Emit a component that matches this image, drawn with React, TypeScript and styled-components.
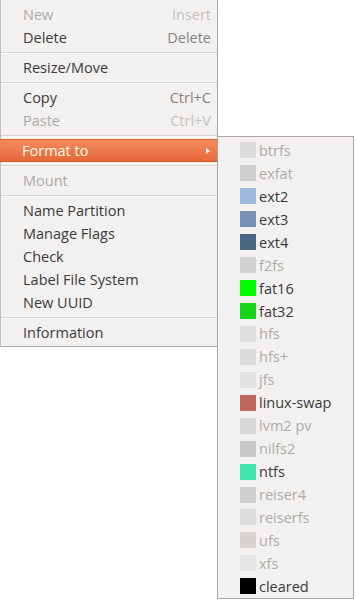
import React from "react";
import styled, { createGlobalStyle } from "styled-components";

const Global = createGlobalStyle`
  html, body { margin: 0; padding: 0; background: #ffffff; }
  body { font-family: "Open Sans", "DejaVu Sans", sans-serif; }
`;

const Page = styled.div`
  display: flex;
  align-items: flex-start;
  width: 356px;
  height: 602px;
  overflow: hidden;
`;

const MainMenu = styled.div`
  box-sizing: border-box;
  width: 218px;
  padding: 3px 0 2px;
  background: #f2f1f0;
  border-left: 1px solid #c4c1bd;
  border-right: 1px solid #a9a6a2;
  border-bottom: 1px solid #a9a6a2;
  display: flex;
  flex-direction: column;
`;

const SubMenu = styled.div`
  box-sizing: border-box;
  width: 137px;
  margin-top: 136px;
  margin-left: -1px;
  padding: 2px 0 0;
  background: #f2f1f0;
  border: 1px solid #a9a6a2;
  display: flex;
  flex-direction: column;
`;

const Item = styled.div<{ $disabled?: boolean; $active?: boolean }>`
  box-sizing: border-box;
  height: 23px;
  display: flex;
  align-items: center;
  justify-content: space-between;
  padding: 0 6px 0 22px;
  font-size: 14.5px;
  color: ${(p) => (p.$active ? "#fffbea" : p.$disabled ? "#aeaba8" : "#3a3a3a")};
  background: ${(p) =>
    p.$active ? "linear-gradient(#f38a5b, #e7683a)" : "transparent"};
  border-top: ${(p) => (p.$active ? "1px solid #d9673a" : "none")};
  border-bottom: ${(p) => (p.$active ? "1px solid #cf5b2c" : "none")};
  margin: ${(p) => (p.$active ? "0 -1px" : "0")};
`;

const Shortcut = styled.span<{ $disabled?: boolean }>`
  color: ${(p) => (p.$disabled ? "#c4c2bf" : "#858380")};
`;

const Arrow = styled.span`
  width: 0;
  height: 0;
  margin-right: 2px;
  border-top: 3px solid transparent;
  border-bottom: 3px solid transparent;
  border-left: 4px solid #fff4e8;
`;

const Separator = styled.div`
  height: 7px;
  display: flex;
  flex-direction: column;
  justify-content: center;
  &::before {
    content: "";
    display: block;
    height: 1px;
    background: #d8d5d1;
  }
  &::after {
    content: "";
    display: block;
    height: 1px;
    background: #fbfbfa;
  }
`;

const FsItem = styled.div<{ $disabled?: boolean }>`
  height: 22.95px;
  display: flex;
  align-items: center;
  gap: 3px;
  padding-left: 22px;
  font-size: 14.5px;
  color: ${(p) => (p.$disabled ? "#aeaba8" : "#3a3a3a")};
`;

const Swatch = styled.span<{ $color: string }>`
  width: 16px;
  height: 16px;
  background: ${(p) => p.$color};
  flex: none;
`;

type Entry =
  | { sep: true }
  | { label: string; shortcut?: string; disabled?: boolean; active?: boolean; sub?: boolean };

const mainItems: Entry[] = [
  { label: "New", shortcut: "Insert", disabled: true },
  { label: "Delete", shortcut: "Delete" },
  { sep: true },
  { label: "Resize/Move" },
  { sep: true },
  { label: "Copy", shortcut: "Ctrl+C" },
  { label: "Paste", shortcut: "Ctrl+V", disabled: true },
  { sep: true },
  { label: "Format to", active: true, sub: true },
  { sep: true },
  { label: "Mount", disabled: true },
  { sep: true },
  { label: "Name Partition" },
  { label: "Manage Flags" },
  { label: "Check" },
  { label: "Label File System" },
  { label: "New UUID" },
  { sep: true },
  { label: "Information" },
];

const fsItems: { name: string; color: string; disabled?: boolean }[] = [
  { name: "btrfs", color: "#dddbd9", disabled: true },
  { name: "exfat", color: "#d0cecc", disabled: true },
  { name: "ext2", color: "#9fb9dc" },
  { name: "ext3", color: "#7891b4" },
  { name: "ext4", color: "#4a6884" },
  { name: "f2fs", color: "#d3d1cf", disabled: true },
  { name: "fat16", color: "#00ff00" },
  { name: "fat32", color: "#18d418" },
  { name: "hfs", color: "#e0dfdd", disabled: true },
  { name: "hfs+", color: "#dcdbd9", disabled: true },
  { name: "jfs", color: "#e3e2e0", disabled: true },
  { name: "linux-swap", color: "#c1665a" },
  { name: "lvm2 pv", color: "#d8d7d5", disabled: true },
  { name: "nilfs2", color: "#cac8c6", disabled: true },
  { name: "ntfs", color: "#42e5ac" },
  { name: "reiser4", color: "#d0cfcd", disabled: true },
  { name: "reiserfs", color: "#dddcda", disabled: true },
  { name: "ufs", color: "#d7d4cf", disabled: true },
  { name: "xfs", color: "#e6e5e3", disabled: true },
  { name: "cleared", color: "#000000" },
];

export default function App() {
  return (
    <>
      <Global />
      <Page>
        <MainMenu>
          {mainItems.map((e, i) =>
            "sep" in e ? (
              <Separator key={i} />
            ) : (
              <Item key={i} $disabled={e.disabled} $active={e.active}>
                <span>{e.label}</span>
                {e.shortcut && <Shortcut $disabled={e.disabled}>{e.shortcut}</Shortcut>}
                {e.sub && <Arrow />}
              </Item>
            )
          )}
        </MainMenu>
        <SubMenu>
          {fsItems.map((f) => (
            <FsItem key={f.name} $disabled={f.disabled}>
              <Swatch $color={f.color} />
              <span>{f.name}</span>
            </FsItem>
          ))}
        </SubMenu>
      </Page>
    </>
  );
}
